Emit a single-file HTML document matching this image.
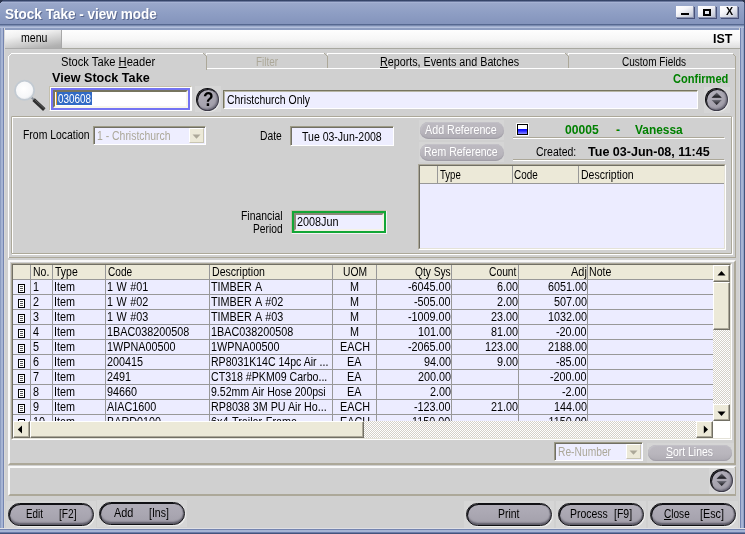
<!DOCTYPE html>
<html>
<head>
<meta charset="utf-8">
<title>Stock Take - view mode</title>
<style>
html,body{margin:0;padding:0;}
body{width:745px;height:534px;overflow:hidden;background:#d0d0d0;font-family:"Liberation Sans",sans-serif;font-size:12px;color:#000;position:relative;}
.a{position:absolute;box-sizing:border-box;}
.t{position:absolute;white-space:nowrap;transform-origin:0 0;}
.w{background:#fff;}
.s{background:#aca899;}
.d{background:#989898;}
.fld{background:#eeeeff;border:1px solid;border-color:#77755f #fff #fff #77755f;box-shadow:inset 1px 1px 0 #b8b6a6;}
.btn{border-radius:12px;border:1px solid #101014;background:linear-gradient(180deg,#b0adb8 0,#aaa7b2 50%,#a29faa 100%);box-shadow:inset 1px 1px 0 #101014, inset 0 -2px 2px #5c5a66, inset -1px 0 1px #6c6a76, 1px 1px 0 #ececec;}
.dbtn{border-radius:9px;background:linear-gradient(180deg,#bdbac1 0,#b9b6bd 55%,#adaab2 100%);box-shadow:inset 0 -1px 1px #a09da6, inset 1px 1px 1px #c4c2c8;}
.rnd{border-radius:50%;border:1px solid;border-color:#0c0c10 #3c3a48 #3c3a48 #0c0c10;background:linear-gradient(150deg,#b6b3be 0,#aaa7b2 45%,#9e9ba6 100%);box-shadow:inset 1px 1px 0 #141418, inset -1px -1px 2px #6a6876, 1px 1px 0 #e8e8e8;}
.wb{background:linear-gradient(150deg,#ffffff 0,#f6f6fa 35%,#d0d4e0 75%,#b0b6ca 100%);box-shadow:1px 1px 0 #48527a, inset -1px -1px 0 #8c94b0;}
.gh{background:#ece9d8;}
.gb{background:#ebebff;}
.sbb{background:#ece9d8;border:1px solid;border-color:#fff #716f64 #716f64 #fff;box-shadow:inset -1px -1px 0 #aca899;}
.chk{background-color:#ffffff;background-image:linear-gradient(45deg,#d4d0c8 25%,transparent 25%,transparent 75%,#d4d0c8 75%),linear-gradient(45deg,#d4d0c8 25%,transparent 25%,transparent 75%,#d4d0c8 75%);background-size:2px 2px;background-position:0 0,1px 1px;}
.cmb{background:#eeeeff;border:1px solid;border-color:#9c9a86 #fff #fff #9c9a86;box-shadow:inset 1px 1px 0 #716f64;}

</style>
</head>
<body>
<div class="a " style="left:0px;top:0px;width:745px;height:30px;background:linear-gradient(180deg,#2e3c5c 0,#42527a 1.3px,#a8b4d4 1.8px,#a8b4d4 2.4px,#9aa8ca 3px,#8e9ec4 13px,#8494bc 24px,#566890 24.3px,#566890 25.3px,#8c9cc0 25.6px,#8c9cc0 26.4px,#b4c0dc 26.6px,#b4c0dc 27.5px,#8c9cc0 27.8px,#8c9cc0 30px);"></div>
<div class="a " style="left:0px;top:0px;width:4px;height:4px;background:linear-gradient(135deg,#2c3650 0,#2c3650 45%,transparent 46%);"></div>
<div class="a " style="left:741px;top:0px;width:4px;height:4px;background:linear-gradient(225deg,#2c3650 0,#2c3650 45%,transparent 46%);"></div>
<div class="a " style="left:0px;top:28px;width:4px;height:506px;background:linear-gradient(90deg,#8c9cc0 0,#8c9cc0 1px,#a6b4d4 1px,#a6b4d4 3px,#7484b0 3px);"></div>
<div class="a " style="left:744px;top:3px;width:1px;height:25px;background:#44547c;"></div>
<div class="a " style="left:739px;top:28px;width:1px;height:501px;background:#d8d8d8;"></div>
<div class="a " style="left:4px;top:28px;width:1px;height:501px;background:#d8d8d8;"></div>
<div class="a " style="left:740px;top:28px;width:5px;height:506px;background:linear-gradient(90deg,#7484b0 0,#7484b0 1px,#a8b4d4 1px,#a8b4d4 3px,#94a2c8 3px,#94a2c8 4px,#44547c 4px);"></div>
<div class="a " style="left:0px;top:528px;width:745px;height:6px;background:linear-gradient(180deg,#e0e0e4 0,#e0e0e4 1px,#7484b0 1px,#7484b0 2px,#a6b4d4 2px,#a6b4d4 4px,#6c7caa 4px,#6c7caa 5px,#44547c 5px);"></div>
<div class="t" style="left:5.00px;top:6px;font-size:14px;line-height:16px;transform:scaleX(0.9674);font-weight:700;color:#fff;text-shadow:1px 1px 0 rgba(50,62,100,0.55);">Stock Take - view mode</div>
<div class="a wb" style="left:676px;top:6px;width:18px;height:12px;"></div>
<div class="a wb" style="left:698px;top:6px;width:18px;height:12px;"></div>
<div class="a wb" style="left:720px;top:6px;width:18px;height:12px;"></div>
<div class="a " style="left:681px;top:13px;width:8px;height:2px;background:#000;"></div>
<div class="a " style="left:703px;top:9px;width:8px;height:7px;border:2px solid #000;"></div>
<div class="t" style="left:725.50px;top:6px;font-size:10px;line-height:11px;transform:scaleX(1.0714);font-weight:700;">X</div>
<div class="a " style="left:5px;top:30px;width:735px;height:19px;background:linear-gradient(180deg,#fefefe 0,#f6f6f6 55%,#dedede 100%);border-bottom:1px solid #a8a8a0;"></div>
<div class="a " style="left:5px;top:30px;width:57px;height:19px;background:linear-gradient(170deg,#fdfdfd 0,#f0f0f0 30%,#cccccc 65%,#b2b2b2 88%,#acacac 100%);border-right:1px solid #a8a8a8;border-bottom:1px solid #ababab;"></div>
<div class="t" style="left:20.50px;top:31px;font-size:12px;line-height:14px;transform:scaleX(0.8792);">menu</div>
<div class="t" style="left:713.00px;top:32px;font-size:12px;line-height:14px;transform:scaleX(1.0342);font-weight:700;">IST</div>
<div class="a w" style="left:8px;top:56px;width:1px;height:202px;"></div>
<div class="a w" style="left:11px;top:53px;width:192px;height:1px;"></div>
<div class="a w" style="left:10px;top:54px;width:1px;height:1px;"></div>
<div class="a w" style="left:9px;top:55px;width:1px;height:1px;"></div>
<div class="a w" style="left:206px;top:53px;width:527px;height:1px;"></div>
<div class="a w" style="left:207px;top:68px;width:528px;height:1px;"></div>
<div class="a s" style="left:206px;top:56px;width:1px;height:14px;"></div>
<div class="a " style="left:203px;top:53px;width:3px;height:1px;background:#d0d0d0;"></div>
<div class="a s" style="left:203px;top:53px;width:1px;height:1px;"></div>
<div class="a s" style="left:204px;top:54px;width:1px;height:1px;"></div>
<div class="a s" style="left:205px;top:55px;width:1px;height:1px;"></div>
<div class="a w" style="left:206px;top:54px;width:1px;height:1px;"></div>
<div class="a s" style="left:327px;top:56px;width:1px;height:12px;"></div>
<div class="a " style="left:324px;top:53px;width:3px;height:1px;background:#d0d0d0;"></div>
<div class="a s" style="left:324px;top:53px;width:1px;height:1px;"></div>
<div class="a s" style="left:325px;top:54px;width:1px;height:1px;"></div>
<div class="a s" style="left:326px;top:55px;width:1px;height:1px;"></div>
<div class="a w" style="left:327px;top:54px;width:1px;height:1px;"></div>
<div class="a s" style="left:568px;top:56px;width:1px;height:12px;"></div>
<div class="a " style="left:565px;top:53px;width:3px;height:1px;background:#d0d0d0;"></div>
<div class="a s" style="left:565px;top:53px;width:1px;height:1px;"></div>
<div class="a s" style="left:566px;top:54px;width:1px;height:1px;"></div>
<div class="a s" style="left:567px;top:55px;width:1px;height:1px;"></div>
<div class="a w" style="left:568px;top:54px;width:1px;height:1px;"></div>
<div class="a s" style="left:735px;top:56px;width:1px;height:202px;"></div>
<div class="a " style="left:733px;top:54px;width:2px;height:2px;background:linear-gradient(45deg,transparent 40%,#aca899 40%,#aca899 60%,transparent 60%);"></div>
<div class="a s" style="left:9px;top:257px;width:727px;height:1px;"></div>
<div class="a " style="left:8px;top:260px;width:728px;height:205px;border:2px solid;border-color:#f8f8f8 #aca899 #aca899 #f8f8f8;"></div>
<div class="a " style="left:8px;top:466px;width:728px;height:30px;border:2px solid;border-color:#f8f8f8 #aca899 #aca899 #f8f8f8;"></div>
<div class="t" style="left:61.30px;top:55px;font-size:12px;line-height:14px;transform:scaleX(0.9311);">Stock Take <u>H</u>eader</div>
<div class="t" style="left:256.00px;top:55px;font-size:12px;line-height:14px;transform:scaleX(0.8249);color:#aca899;">Filter</div>
<div class="t" style="left:380.00px;top:55px;font-size:12px;line-height:14px;transform:scaleX(0.8944);"><u>R</u>eports, Events and Batches</div>
<div class="t" style="left:622.00px;top:55px;font-size:12px;line-height:14px;transform:scaleX(0.8346);">Custom Fields</div>
<div class="t" style="left:52.00px;top:71px;font-size:12px;line-height:14px;transform:scaleX(1.0508);font-weight:700;">View Stock Take</div>
<div class="t" style="left:673.00px;top:72px;font-size:12px;line-height:14px;transform:scaleX(0.9217);font-weight:700;color:#008000;">Confirmed</div>
<svg class="a" style="left:12px;top:78px" width="38" height="36" viewBox="0 0 38 36">
<defs><radialGradient id="mg" cx="45%" cy="42%" r="60%"><stop offset="0" stop-color="#ffffff"/><stop offset="0.75" stop-color="#f6f7f9"/><stop offset="1" stop-color="#dde1e6"/></radialGradient></defs>
<line x1="19" y1="19" x2="22" y2="21.8" stroke="#8a9098" stroke-width="2"/>
<line x1="21.6" y1="21.6" x2="32.3" y2="31.6" stroke="#2e2e2e" stroke-width="3.6"/>
<line x1="22.6" y1="21.6" x2="32.6" y2="30.9" stroke="#6a6a6a" stroke-width="0.8"/>
<circle cx="12.6" cy="12.3" r="9.6" fill="url(#mg)" stroke="#c2cad2" stroke-width="1.8"/>
</svg>
<div class="a " style="left:49px;top:86px;width:143px;height:25px;background:#fff;border:1px solid;border-color:#c4c0ac #fff #fff #c4c0ac;border-radius:1px;"></div>
<div class="a " style="left:51px;top:88px;width:139px;height:22px;background:#fff;border:2px solid #7474f2;"></div>
<div class="a " style="left:53px;top:90px;width:135px;height:18px;border:2px solid;border-color:#77755f #f8f6ea #f8f6ea #77755f;"></div>
<div class="a " style="left:56px;top:92px;width:36px;height:13px;background:#316ac5;"></div>
<div class="a " style="left:56px;top:92px;width:1px;height:13px;background:#e0a030;"></div>
<div class="t" style="left:57.70px;top:92px;font-size:12px;line-height:14px;transform:scaleX(0.8249);color:#fff;">030608</div>
<div class="a " style="left:195px;top:86px;width:26px;height:26px;background:#d6d6d6;"></div>
<div class="a rnd" style="left:196px;top:88px;width:23px;height:23px;"></div>
<div class="t" style="left:203.00px;top:88px;font-size:20px;line-height:22px;transform:scaleX(0.8667);font-weight:700;">?</div>
<div class="a fld" style="left:223px;top:90px;width:475px;height:19px;"></div>
<div class="t" style="left:227.00px;top:93px;font-size:12px;line-height:14px;transform:scaleX(0.8704);">Christchurch Only</div>
<div class="a " style="left:704px;top:87px;width:26px;height:26px;background:#d6d6d6;"></div>
<div class="a rnd" style="left:705px;top:88px;width:23px;height:23px;"></div>
<svg class="a" style="left:705px;top:88px" width="23" height="23" viewBox="0 0 23 23"><defs><linearGradient id="ug705" x1="0" y1="0" x2="0" y2="1"><stop offset="0" stop-color="#70707a"/><stop offset="1" stop-color="#101014"/></linearGradient></defs><path d="M6.6 9.7 L11.7 4.6 L16.8 9.7 Z" fill="url(#ug705)"/><path d="M6.6 12 L11.7 17.1 L16.8 12 Z" fill="url(#ug705)"/></svg>
<div class="a " style="left:12px;top:117px;width:721px;height:138px;border:1px solid #fff;"></div>
<div class="a " style="left:11px;top:116px;width:721px;height:138px;border:1px solid #aca899;border-radius:1px;"></div>
<div class="t" style="left:23.00px;top:128px;font-size:12px;line-height:14px;transform:scaleX(0.8681);">From Location</div>
<div class="a cmb" style="left:93px;top:126px;width:113px;height:19px;"></div>
<div class="a " style="left:189px;top:128px;width:15px;height:15px;background:#ece9d8;border:1px solid;border-color:#fff #c8c5b2 #c8c5b2 #fff;"></div>
<svg class="a" style="left:192px;top:134px" width="9" height="5" viewBox="0 0 9 5"><path d="M0.5 0.5 L8.5 0.5 L4.5 4.7 Z" fill="#aca899"/></svg>
<div class="t" style="left:97.00px;top:129px;font-size:12px;line-height:14px;transform:scaleX(0.8689);color:#aca899;">1 - Christchurch</div>
<div class="t" style="left:260.00px;top:129px;font-size:12px;line-height:14px;transform:scaleX(0.8569);">Date</div>
<div class="a cmb" style="left:290px;top:126px;width:104px;height:20px;"></div>
<div class="t" style="left:302.00px;top:130px;font-size:12px;line-height:14px;transform:scaleX(0.8765);">Tue 03-Jun-2008</div>
<div class="t" style="left:241.00px;top:209px;font-size:12px;line-height:14px;transform:scaleX(0.8658);">Financial</div>
<div class="t" style="left:253.00px;top:222px;font-size:12px;line-height:14px;transform:scaleX(0.8526);">Period</div>
<div class="a " style="left:291px;top:210px;width:96px;height:24px;border:1px solid;border-color:#c4c0ac #f4f4f4 #f4f4f4 #c4c0ac;background:#eeeeff;border-radius:1px;"></div>
<div class="a " style="left:292px;top:211px;width:94px;height:22px;border:2px solid #12a636;background:#eeeeff;"></div>
<div class="a " style="left:294px;top:213px;width:90px;height:18px;border:2px solid;border-color:#8a8876 #f4f2e6 #f4f2e6 #8a8876;"></div>
<div class="t" style="left:297.00px;top:215px;font-size:12px;line-height:14px;transform:scaleX(0.9037);">2008Jun</div>
<div class="a " style="left:419px;top:120px;width:85px;height:20px;background:#d5d5d5;"></div>
<div class="a " style="left:419px;top:142px;width:85px;height:20px;background:#d5d5d5;"></div>
<div class="a dbtn" style="left:420px;top:122px;width:84px;height:17px;"></div>
<div class="a dbtn" style="left:420px;top:144px;width:84px;height:17px;"></div>
<div class="t" style="left:425.00px;top:123px;font-size:12px;line-height:14px;transform:scaleX(0.8958);color:#fff;text-shadow:1px 1px 0 #aeabb3;">Add Reference</div>
<div class="t" style="left:424.00px;top:145px;font-size:12px;line-height:14px;transform:scaleX(0.8772);color:#fff;text-shadow:1px 1px 0 #aeabb3;">Rem Reference</div>
<div class="a " style="left:516px;top:123px;width:13px;height:13px;background:#fff;border-radius:1px;"></div>
<div class="a " style="left:517px;top:124px;width:11px;height:11px;border:1px solid #000;background:linear-gradient(180deg,#fff 0,#fff 44%,#0808ff 46%,#2020ff 65%,#9090ff 100%);"></div>
<div class="t" style="left:565.00px;top:123px;font-size:12px;line-height:14px;transform:scaleX(1.0090);font-weight:700;color:#008000;">00005</div>
<div class="t" style="left:616.00px;top:123px;font-size:12px;line-height:14px;transform:scaleX(1.0000);font-weight:700;color:#008000;">-</div>
<div class="t" style="left:635.00px;top:123px;font-size:12px;line-height:14px;transform:scaleX(0.9924);font-weight:700;color:#008000;">Vanessa</div>
<div class="a s" style="left:513px;top:137px;width:211px;height:1px;"></div>
<div class="a w" style="left:513px;top:138px;width:212px;height:1px;"></div>
<div class="t" style="left:536.00px;top:145px;font-size:12px;line-height:14px;transform:scaleX(0.8754);">Created:</div>
<div class="t" style="left:588.00px;top:145px;font-size:12px;line-height:14px;transform:scaleX(1.0443);font-weight:700;">Tue 03-Jun-08, 11:45</div>
<div class="a s" style="left:513px;top:159px;width:211px;height:1px;"></div>
<div class="a w" style="left:513px;top:160px;width:212px;height:1px;"></div>
<div class="a " style="left:418px;top:164px;width:308px;height:86px;border:1px solid;border-color:#aca899 #fff #fff #aca899;background:#ececff;"></div>
<div class="a " style="left:419px;top:165px;width:306px;height:84px;border:1px solid;border-color:#716f64 #e4e2d8 #e4e2d8 #716f64;background:#ececff;"></div>
<div class="a gh" style="left:420px;top:166px;width:304px;height:17px;"></div>
<div class="a d" style="left:420px;top:183px;width:304px;height:1px;"></div>
<div class="a d" style="left:437px;top:166px;width:1px;height:18px;"></div>
<div class="a d" style="left:512px;top:166px;width:1px;height:18px;"></div>
<div class="a d" style="left:578px;top:166px;width:1px;height:18px;"></div>
<div class="t" style="left:440.00px;top:168px;font-size:12px;line-height:14px;transform:scaleX(0.7972);">Type</div>
<div class="t" style="left:514.00px;top:168px;font-size:12px;line-height:14px;transform:scaleX(0.8272);">Code</div>
<div class="t" style="left:581.00px;top:168px;font-size:12px;line-height:14px;transform:scaleX(0.8762);">Description</div>
<div class="a " style="left:11px;top:263px;width:721px;height:177px;border:1px solid;border-color:#aca899 #fff #fff #aca899;"></div>
<div class="a " style="left:12px;top:264px;width:719px;height:175px;border:1px solid;border-color:#716f64 #e4e2d8 #e4e2d8 #716f64;background:#ececff;"></div>
<div class="a gh" style="left:13px;top:265px;width:700px;height:14px;"></div>
<div class="a" style="left:13px;top:279px;width:700px;height:142px;overflow:hidden;">
<div class="a d" style="left:0px;top:15px;width:700px;height:1px;"></div>
<svg class="a" style="left:5px;top:5px" width="7" height="9" viewBox="0 0 7 9"><rect x="0.5" y="0.5" width="6" height="8" fill="#fff" stroke="#000"/><path d="M2 2.5H5M2 4.5H5M2 6.5H5" stroke="#555" stroke-width="1"/></svg>
<div class="t" style="left:20.00px;top:1px;font-size:12px;line-height:14px;transform:scaleX(0.9000);">1</div>
<div class="t" style="left:41.10px;top:1px;font-size:12px;line-height:14px;transform:scaleX(0.9000);">Item</div>
<div class="t" style="left:93.80px;top:1px;font-size:12px;line-height:14px;transform:scaleX(0.9000);word-spacing:0.6px;">1 W #01</div>
<div class="t" style="left:198.00px;top:1px;font-size:12px;line-height:14px;transform:scaleX(0.9000);word-spacing:0.8px;">TIMBER A</div>
<div class="t" style="left:337.00px;top:1px;font-size:12px;line-height:14px;transform:scaleX(0.9000);">M</div>
<div class="t" style="left:395.07px;top:1px;font-size:12px;line-height:14px;transform:scaleX(0.9000);">-6045.00</div>
<div class="t" style="left:483.69px;top:1px;font-size:12px;line-height:14px;transform:scaleX(0.9000);">6.00</div>
<div class="t" style="left:534.67px;top:1px;font-size:12px;line-height:14px;transform:scaleX(0.9000);">6051.00</div>
<div class="a d" style="left:0px;top:30px;width:700px;height:1px;"></div>
<svg class="a" style="left:5px;top:20px" width="7" height="9" viewBox="0 0 7 9"><rect x="0.5" y="0.5" width="6" height="8" fill="#fff" stroke="#000"/><path d="M2 2.5H5M2 4.5H5M2 6.5H5" stroke="#555" stroke-width="1"/></svg>
<div class="t" style="left:20.00px;top:16px;font-size:12px;line-height:14px;transform:scaleX(0.9000);">2</div>
<div class="t" style="left:41.10px;top:16px;font-size:12px;line-height:14px;transform:scaleX(0.9000);">Item</div>
<div class="t" style="left:93.80px;top:16px;font-size:12px;line-height:14px;transform:scaleX(0.9000);word-spacing:0.6px;">1 W #02</div>
<div class="t" style="left:198.00px;top:16px;font-size:12px;line-height:14px;transform:scaleX(0.9000);word-spacing:0.8px;">TIMBER A #02</div>
<div class="t" style="left:337.00px;top:16px;font-size:12px;line-height:14px;transform:scaleX(0.9000);">M</div>
<div class="t" style="left:401.08px;top:16px;font-size:12px;line-height:14px;transform:scaleX(0.9000);">-505.00</div>
<div class="t" style="left:483.69px;top:16px;font-size:12px;line-height:14px;transform:scaleX(0.9000);">2.00</div>
<div class="t" style="left:540.67px;top:16px;font-size:12px;line-height:14px;transform:scaleX(0.9000);">507.00</div>
<div class="a d" style="left:0px;top:45px;width:700px;height:1px;"></div>
<svg class="a" style="left:5px;top:35px" width="7" height="9" viewBox="0 0 7 9"><rect x="0.5" y="0.5" width="6" height="8" fill="#fff" stroke="#000"/><path d="M2 2.5H5M2 4.5H5M2 6.5H5" stroke="#555" stroke-width="1"/></svg>
<div class="t" style="left:20.00px;top:31px;font-size:12px;line-height:14px;transform:scaleX(0.9000);">3</div>
<div class="t" style="left:41.10px;top:31px;font-size:12px;line-height:14px;transform:scaleX(0.9000);">Item</div>
<div class="t" style="left:93.80px;top:31px;font-size:12px;line-height:14px;transform:scaleX(0.9000);word-spacing:0.6px;">1 W #03</div>
<div class="t" style="left:198.00px;top:31px;font-size:12px;line-height:14px;transform:scaleX(0.9000);word-spacing:0.8px;">TIMBER A #03</div>
<div class="t" style="left:337.00px;top:31px;font-size:12px;line-height:14px;transform:scaleX(0.9000);">M</div>
<div class="t" style="left:395.07px;top:31px;font-size:12px;line-height:14px;transform:scaleX(0.9000);">-1009.00</div>
<div class="t" style="left:477.68px;top:31px;font-size:12px;line-height:14px;transform:scaleX(0.9000);">23.00</div>
<div class="t" style="left:534.67px;top:31px;font-size:12px;line-height:14px;transform:scaleX(0.9000);">1032.00</div>
<div class="a d" style="left:0px;top:60px;width:700px;height:1px;"></div>
<svg class="a" style="left:5px;top:50px" width="7" height="9" viewBox="0 0 7 9"><rect x="0.5" y="0.5" width="6" height="8" fill="#fff" stroke="#000"/><path d="M2 2.5H5M2 4.5H5M2 6.5H5" stroke="#555" stroke-width="1"/></svg>
<div class="t" style="left:20.00px;top:46px;font-size:12px;line-height:14px;transform:scaleX(0.9000);">4</div>
<div class="t" style="left:41.10px;top:46px;font-size:12px;line-height:14px;transform:scaleX(0.9000);">Item</div>
<div class="t" style="left:93.80px;top:46px;font-size:12px;line-height:14px;transform:scaleX(0.9000);word-spacing:0.6px;">1BAC038200508</div>
<div class="t" style="left:198.00px;top:46px;font-size:12px;line-height:14px;transform:scaleX(0.9000);word-spacing:0.8px;">1BAC038200508</div>
<div class="t" style="left:337.00px;top:46px;font-size:12px;line-height:14px;transform:scaleX(0.9000);">M</div>
<div class="t" style="left:404.67px;top:46px;font-size:12px;line-height:14px;transform:scaleX(0.9000);">101.00</div>
<div class="t" style="left:477.68px;top:46px;font-size:12px;line-height:14px;transform:scaleX(0.9000);">81.00</div>
<div class="t" style="left:543.08px;top:46px;font-size:12px;line-height:14px;transform:scaleX(0.9000);">-20.00</div>
<div class="a d" style="left:0px;top:75px;width:700px;height:1px;"></div>
<svg class="a" style="left:5px;top:65px" width="7" height="9" viewBox="0 0 7 9"><rect x="0.5" y="0.5" width="6" height="8" fill="#fff" stroke="#000"/><path d="M2 2.5H5M2 4.5H5M2 6.5H5" stroke="#555" stroke-width="1"/></svg>
<div class="t" style="left:20.00px;top:61px;font-size:12px;line-height:14px;transform:scaleX(0.9000);">5</div>
<div class="t" style="left:41.10px;top:61px;font-size:12px;line-height:14px;transform:scaleX(0.9000);">Item</div>
<div class="t" style="left:93.80px;top:61px;font-size:12px;line-height:14px;transform:scaleX(0.9000);word-spacing:0.6px;">1WPNA00500</div>
<div class="t" style="left:198.00px;top:61px;font-size:12px;line-height:14px;transform:scaleX(0.9000);word-spacing:0.8px;">1WPNA00500</div>
<div class="t" style="left:326.80px;top:61px;font-size:12px;line-height:14px;transform:scaleX(0.9000);">EACH</div>
<div class="t" style="left:395.07px;top:61px;font-size:12px;line-height:14px;transform:scaleX(0.9000);">-2065.00</div>
<div class="t" style="left:471.67px;top:61px;font-size:12px;line-height:14px;transform:scaleX(0.9000);">123.00</div>
<div class="t" style="left:534.67px;top:61px;font-size:12px;line-height:14px;transform:scaleX(0.9000);">2188.00</div>
<div class="a d" style="left:0px;top:90px;width:700px;height:1px;"></div>
<svg class="a" style="left:5px;top:80px" width="7" height="9" viewBox="0 0 7 9"><rect x="0.5" y="0.5" width="6" height="8" fill="#fff" stroke="#000"/><path d="M2 2.5H5M2 4.5H5M2 6.5H5" stroke="#555" stroke-width="1"/></svg>
<div class="t" style="left:20.00px;top:76px;font-size:12px;line-height:14px;transform:scaleX(0.9000);">6</div>
<div class="t" style="left:41.10px;top:76px;font-size:12px;line-height:14px;transform:scaleX(0.9000);">Item</div>
<div class="t" style="left:93.80px;top:76px;font-size:12px;line-height:14px;transform:scaleX(0.9000);word-spacing:0.6px;">200415</div>
<div class="t" style="left:198.00px;top:76px;font-size:12px;line-height:14px;transform:scaleX(0.8793);">RP8031K14C 14pc Air ...</div>
<div class="t" style="left:334.30px;top:76px;font-size:12px;line-height:14px;transform:scaleX(0.9000);">EA</div>
<div class="t" style="left:410.68px;top:76px;font-size:12px;line-height:14px;transform:scaleX(0.9000);">94.00</div>
<div class="t" style="left:483.69px;top:76px;font-size:12px;line-height:14px;transform:scaleX(0.9000);">9.00</div>
<div class="t" style="left:543.08px;top:76px;font-size:12px;line-height:14px;transform:scaleX(0.9000);">-85.00</div>
<div class="a d" style="left:0px;top:105px;width:700px;height:1px;"></div>
<svg class="a" style="left:5px;top:95px" width="7" height="9" viewBox="0 0 7 9"><rect x="0.5" y="0.5" width="6" height="8" fill="#fff" stroke="#000"/><path d="M2 2.5H5M2 4.5H5M2 6.5H5" stroke="#555" stroke-width="1"/></svg>
<div class="t" style="left:20.00px;top:91px;font-size:12px;line-height:14px;transform:scaleX(0.9000);">7</div>
<div class="t" style="left:41.10px;top:91px;font-size:12px;line-height:14px;transform:scaleX(0.9000);">Item</div>
<div class="t" style="left:93.80px;top:91px;font-size:12px;line-height:14px;transform:scaleX(0.9000);word-spacing:0.6px;">2491</div>
<div class="t" style="left:198.00px;top:91px;font-size:12px;line-height:14px;transform:scaleX(0.8851);">CT318 #PKM09 Carbo...</div>
<div class="t" style="left:334.30px;top:91px;font-size:12px;line-height:14px;transform:scaleX(0.9000);">EA</div>
<div class="t" style="left:404.67px;top:91px;font-size:12px;line-height:14px;transform:scaleX(0.9000);">200.00</div>
<div class="t" style="left:537.08px;top:91px;font-size:12px;line-height:14px;transform:scaleX(0.9000);">-200.00</div>
<div class="a d" style="left:0px;top:120px;width:700px;height:1px;"></div>
<svg class="a" style="left:5px;top:110px" width="7" height="9" viewBox="0 0 7 9"><rect x="0.5" y="0.5" width="6" height="8" fill="#fff" stroke="#000"/><path d="M2 2.5H5M2 4.5H5M2 6.5H5" stroke="#555" stroke-width="1"/></svg>
<div class="t" style="left:20.00px;top:106px;font-size:12px;line-height:14px;transform:scaleX(0.9000);">8</div>
<div class="t" style="left:41.10px;top:106px;font-size:12px;line-height:14px;transform:scaleX(0.9000);">Item</div>
<div class="t" style="left:93.80px;top:106px;font-size:12px;line-height:14px;transform:scaleX(0.9000);word-spacing:0.6px;">94660</div>
<div class="t" style="left:198.00px;top:106px;font-size:12px;line-height:14px;transform:scaleX(0.8774);">9.52mm Air Hose 200psi</div>
<div class="t" style="left:334.30px;top:106px;font-size:12px;line-height:14px;transform:scaleX(0.9000);">EA</div>
<div class="t" style="left:416.69px;top:106px;font-size:12px;line-height:14px;transform:scaleX(0.9000);">2.00</div>
<div class="t" style="left:549.09px;top:106px;font-size:12px;line-height:14px;transform:scaleX(0.9000);">-2.00</div>
<div class="a d" style="left:0px;top:135px;width:700px;height:1px;"></div>
<svg class="a" style="left:5px;top:125px" width="7" height="9" viewBox="0 0 7 9"><rect x="0.5" y="0.5" width="6" height="8" fill="#fff" stroke="#000"/><path d="M2 2.5H5M2 4.5H5M2 6.5H5" stroke="#555" stroke-width="1"/></svg>
<div class="t" style="left:20.00px;top:121px;font-size:12px;line-height:14px;transform:scaleX(0.9000);">9</div>
<div class="t" style="left:41.10px;top:121px;font-size:12px;line-height:14px;transform:scaleX(0.9000);">Item</div>
<div class="t" style="left:93.80px;top:121px;font-size:12px;line-height:14px;transform:scaleX(0.9000);word-spacing:0.6px;">AIAC1600</div>
<div class="t" style="left:198.00px;top:121px;font-size:12px;line-height:14px;transform:scaleX(0.8943);">RP8038 3M PU Air Ho...</div>
<div class="t" style="left:326.80px;top:121px;font-size:12px;line-height:14px;transform:scaleX(0.9000);">EACH</div>
<div class="t" style="left:401.08px;top:121px;font-size:12px;line-height:14px;transform:scaleX(0.9000);">-123.00</div>
<div class="t" style="left:477.68px;top:121px;font-size:12px;line-height:14px;transform:scaleX(0.9000);">21.00</div>
<div class="t" style="left:540.67px;top:121px;font-size:12px;line-height:14px;transform:scaleX(0.9000);">144.00</div>
<div class="a d" style="left:0px;top:150px;width:700px;height:1px;"></div>
<svg class="a" style="left:5px;top:140px" width="7" height="9" viewBox="0 0 7 9"><rect x="0.5" y="0.5" width="6" height="8" fill="#fff" stroke="#000"/><path d="M2 2.5H5M2 4.5H5M2 6.5H5" stroke="#555" stroke-width="1"/></svg>
<div class="t" style="left:20.00px;top:136px;font-size:12px;line-height:14px;transform:scaleX(0.9000);">10</div>
<div class="t" style="left:41.10px;top:136px;font-size:12px;line-height:14px;transform:scaleX(0.9000);">Item</div>
<div class="t" style="left:93.80px;top:136px;font-size:12px;line-height:14px;transform:scaleX(0.9000);word-spacing:0.6px;">BARD0100</div>
<div class="t" style="left:198.00px;top:136px;font-size:12px;line-height:14px;transform:scaleX(0.9000);word-spacing:0.8px;">6x4 Trailer Frame</div>
<div class="t" style="left:326.80px;top:136px;font-size:12px;line-height:14px;transform:scaleX(0.9000);">EACH</div>
<div class="t" style="left:399.47px;top:136px;font-size:12px;line-height:14px;transform:scaleX(0.9000);">1150.00</div>
<div class="t" style="left:531.87px;top:136px;font-size:12px;line-height:14px;transform:scaleX(0.9000);">-1150.00</div>
<div class="a d" style="left:17px;top:0px;width:1px;height:142px;"></div>
<div class="a d" style="left:39px;top:0px;width:1px;height:142px;"></div>
<div class="a d" style="left:92px;top:0px;width:1px;height:142px;"></div>
<div class="a d" style="left:196px;top:0px;width:1px;height:142px;"></div>
<div class="a d" style="left:319px;top:0px;width:1px;height:142px;"></div>
<div class="a d" style="left:363px;top:0px;width:1px;height:142px;"></div>
<div class="a d" style="left:438px;top:0px;width:1px;height:142px;"></div>
<div class="a d" style="left:505px;top:0px;width:1px;height:142px;"></div>
<div class="a d" style="left:574px;top:0px;width:1px;height:142px;"></div>
</div>
<div class="a d" style="left:13px;top:279px;width:700px;height:1px;"></div>
<div class="a d" style="left:30px;top:265px;width:1px;height:15px;"></div>
<div class="a d" style="left:52px;top:265px;width:1px;height:15px;"></div>
<div class="a d" style="left:105px;top:265px;width:1px;height:15px;"></div>
<div class="a d" style="left:209px;top:265px;width:1px;height:15px;"></div>
<div class="a d" style="left:332px;top:265px;width:1px;height:15px;"></div>
<div class="a d" style="left:376px;top:265px;width:1px;height:15px;"></div>
<div class="a d" style="left:451px;top:265px;width:1px;height:15px;"></div>
<div class="a d" style="left:518px;top:265px;width:1px;height:15px;"></div>
<div class="a d" style="left:587px;top:265px;width:1px;height:15px;"></div>
<div class="t" style="left:32.50px;top:265px;font-size:12px;line-height:14px;transform:scaleX(0.8724);">No.</div>
<div class="t" style="left:55.00px;top:265px;font-size:12px;line-height:14px;transform:scaleX(0.8731);">Type</div>
<div class="t" style="left:107.60px;top:265px;font-size:12px;line-height:14px;transform:scaleX(0.8410);">Code</div>
<div class="t" style="left:211.70px;top:265px;font-size:12px;line-height:14px;transform:scaleX(0.8812);">Description</div>
<div class="t" style="left:342.50px;top:265px;font-size:12px;line-height:14px;transform:scaleX(0.8571);">UOM</div>
<div class="t" style="left:414.60px;top:265px;font-size:12px;line-height:14px;transform:scaleX(0.8499);">Qty Sys</div>
<div class="t" style="left:489.40px;top:265px;font-size:12px;line-height:14px;transform:scaleX(0.8566);">Count</div>
<div class="t" style="left:570.80px;top:265px;font-size:12px;line-height:14px;transform:scaleX(0.9114);">Adj</div>
<div class="t" style="left:589.40px;top:265px;font-size:12px;line-height:14px;transform:scaleX(0.8803);">Note</div>
<div class="a chk" style="left:713px;top:265px;width:17px;height:156px;"></div>
<div class="a sbb" style="left:713px;top:265px;width:17px;height:17px;"></div>
<div class="a sbb" style="left:713px;top:282px;width:17px;height:48px;"></div>
<div class="a sbb" style="left:713px;top:404px;width:17px;height:17px;"></div>
<svg class="a" style="left:717px;top:270px" width="9" height="6" viewBox="0 0 9 6"><path d="M0.5 5.5 L8.5 5.5 L4.5 1 Z" fill="#000"/></svg>
<svg class="a" style="left:717px;top:411px" width="9" height="6" viewBox="0 0 9 6"><path d="M0.5 0.5 L8.5 0.5 L4.5 5 Z" fill="#000"/></svg>
<div class="a chk" style="left:13px;top:421px;width:700px;height:17px;"></div>
<div class="a sbb" style="left:13px;top:421px;width:17px;height:17px;"></div>
<div class="a sbb" style="left:30px;top:421px;width:334px;height:17px;"></div>
<div class="a sbb" style="left:696px;top:421px;width:17px;height:17px;"></div>
<div class="a " style="left:713px;top:421px;width:17px;height:17px;background:#fff;"></div>
<svg class="a" style="left:17px;top:425px" width="6" height="9" viewBox="0 0 6 9"><path d="M5 0.5 L5 8.5 L0.8 4.5 Z" fill="#000"/></svg>
<svg class="a" style="left:703px;top:425px" width="6" height="9" viewBox="0 0 6 9"><path d="M0.8 0.5 L0.8 8.5 L5 4.5 Z" fill="#000"/></svg>
<div class="a cmb" style="left:554px;top:442px;width:89px;height:19px;"></div>
<div class="a " style="left:626px;top:444px;width:15px;height:15px;background:#ece9d8;border:1px solid;border-color:#fff #c8c5b2 #c8c5b2 #fff;"></div>
<svg class="a" style="left:629px;top:450px" width="9" height="5" viewBox="0 0 9 5"><path d="M0.5 0.5 L8.5 0.5 L4.5 4.7 Z" fill="#aca899"/></svg>
<div class="t" style="left:558.00px;top:445px;font-size:12px;line-height:14px;transform:scaleX(0.8546);color:#aca899;">Re-Number</div>
<div class="a " style="left:647px;top:443px;width:87px;height:20px;background:#d5d5d5;"></div>
<div class="a dbtn" style="left:648px;top:445px;width:84px;height:16px;"></div>
<div class="t" style="left:665.50px;top:445px;font-size:12px;line-height:14px;transform:scaleX(0.8699);color:#fff;text-shadow:1px 1px 0 #aeabb3;"><u>S</u>ort Lines</div>
<div class="a " style="left:709px;top:468px;width:26px;height:26px;background:#d6d6d6;"></div>
<div class="a rnd" style="left:710px;top:469px;width:23px;height:23px;"></div>
<svg class="a" style="left:710px;top:469px" width="23" height="23" viewBox="0 0 23 23"><defs><linearGradient id="ug710" x1="0" y1="0" x2="0" y2="1"><stop offset="0" stop-color="#70707a"/><stop offset="1" stop-color="#101014"/></linearGradient></defs><path d="M6.6 9.7 L11.7 4.6 L16.8 9.7 Z" fill="url(#ug710)"/><path d="M6.6 12 L11.7 17.1 L16.8 12 Z" fill="url(#ug710)"/></svg>
<div class="a " style="left:6px;top:501px;width:90px;height:27px;background:#d6d6d6;"></div>
<div class="a btn" style="left:8px;top:503px;width:86px;height:23px;"></div>
<div class="a " style="left:97px;top:500px;width:90px;height:27px;background:#d6d6d6;"></div>
<div class="a btn" style="left:99px;top:502px;width:86px;height:23px;"></div>
<div class="a " style="left:464px;top:501px;width:90px;height:27px;background:#d6d6d6;"></div>
<div class="a btn" style="left:466px;top:503px;width:86px;height:23px;"></div>
<div class="a " style="left:556px;top:501px;width:90px;height:27px;background:#d6d6d6;"></div>
<div class="a btn" style="left:558px;top:503px;width:86px;height:23px;"></div>
<div class="a " style="left:648px;top:501px;width:90px;height:27px;background:#d6d6d6;"></div>
<div class="a btn" style="left:650px;top:503px;width:86px;height:23px;"></div>
<div class="t" style="left:25.50px;top:507px;font-size:12px;line-height:14px;transform:scaleX(0.8199);">Edit</div>
<div class="t" style="left:58.70px;top:507px;font-size:12px;line-height:14px;transform:scaleX(0.8506);">[F2]</div>
<div class="t" style="left:114.30px;top:506px;font-size:12px;line-height:14px;transform:scaleX(0.9044);">Add</div>
<div class="t" style="left:148.70px;top:506px;font-size:12px;line-height:14px;transform:scaleX(0.8773);">[Ins]</div>
<div class="t" style="left:498.00px;top:507px;font-size:12px;line-height:14px;transform:scaleX(0.8682);">Print</div>
<div class="t" style="left:569.50px;top:507px;font-size:12px;line-height:14px;transform:scaleX(0.8720);">Process</div>
<div class="t" style="left:613.70px;top:507px;font-size:12px;line-height:14px;transform:scaleX(0.8752);">[F9]</div>
<div class="t" style="left:664.20px;top:507px;font-size:12px;line-height:14px;transform:scaleX(0.8386);"><u>C</u>lose</div>
<div class="t" style="left:699.60px;top:507px;font-size:12px;line-height:14px;transform:scaleX(0.8998);">[Esc]</div>
</body>
</html>
